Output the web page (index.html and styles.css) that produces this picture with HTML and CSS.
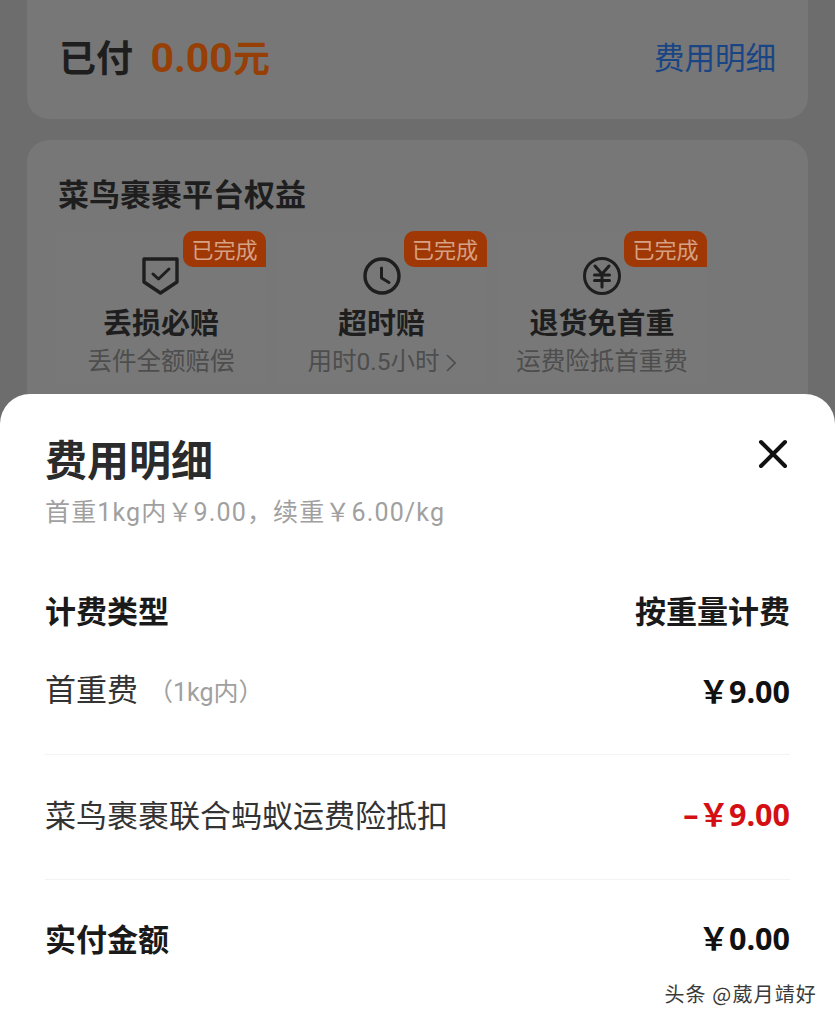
FILE: index.html
```html
<!DOCTYPE html>
<html lang="zh-CN">

<head>
    <meta charset="UTF-8">
    <title>费用明细</title>
    <link rel="stylesheet" href="styles.css">
</head>

<body>
    <div class="backdrop">
        <div class="paid-card">
            <div class="paid-total">已付 <span class="paid-amount">0.00<span class="paid-unit">元</span></span></div>
            <div class="paid-link">费用明细</div>
        </div>
        <div class="rights-card">
            <div class="rights-title">菜鸟裹裹平台权益</div>
            <div class="rights-list">
                <div class="rights-item">
                    <span class="badge">已完成</span>
                    <svg class="rights-icon" viewBox="0 0 38 38" fill="none" stroke="#1e1e1e" stroke-width="3.400" stroke-linejoin="round" stroke-linecap="round">
                        <path d="M2 2H35V25L18.500 36L2 25Z" />
                        <path d="M11 17L16.500 22L27 12" stroke-width="3" />
                    </svg>
                    <div class="rights-name">丢损必赔</div>
                    <div class="rights-desc">丢件全额赔偿</div>
                </div>
                <div class="rights-item">
                    <span class="badge">已完成</span>
                    <svg class="rights-icon" viewBox="0 0 38 38" fill="none" stroke="#1e1e1e" stroke-width="3.400" stroke-linecap="round" stroke-linejoin="round">
                        <circle cx="19" cy="19" r="17" />
                        <path d="M18.500 11V21L26 25.500" stroke-width="3" />
                    </svg>
                    <div class="rights-name">超时赔</div>
                    <div class="rights-desc">用时0.5小时<svg class="rights-arrow" viewBox="0 0 10 18" fill="none" stroke="#4d4d4d" stroke-width="1.600"><path d="M1 1L9 9L1 17" /></svg></div>
                </div>
                <div class="rights-item">
                    <span class="badge">已完成</span>
                    <svg class="rights-icon" viewBox="0 0 38 38" fill="none" stroke="#1e1e1e" stroke-width="3" stroke-linecap="round" stroke-linejoin="round">
                        <circle cx="19" cy="19" r="17.500" />
                        <path d="M12 9L19 17L26 9M11.500 18H26.500M11.500 23.500H26.500M19 17V30" />
                    </svg>
                    <div class="rights-name">退货免首重</div>
                    <div class="rights-desc">运费险抵首重费</div>
                </div>
            </div>
        </div>
    </div>

    <div class="sheet">
        <div class="sheet-head">
            <div>
                <h1 class="sheet-title">费用明细</h1>
                <p class="sheet-sub">首重1kg内￥9.00，续重￥6.00/kg</p>
            </div>
            <svg class="sheet-close" viewBox="0 0 30 30" fill="none" stroke="#111" stroke-width="4" stroke-linecap="round">
                <path d="M3 3L27 27M27 3L3 27" />
            </svg>
        </div>

        <div class="row row-type">
            <span class="row-strong">计费类型</span>
            <span class="row-strong">按重量计费</span>
        </div>
        <div class="row row-first">
            <span>首重费<span class="row-note">（1kg内）</span></span>
            <span class="money">￥9.00</span>
        </div>
        <div class="row row-discount">
            <span>菜鸟裹裹联合蚂蚁运费险抵扣</span>
            <span class="money money-red">–￥9.00</span>
        </div>
        <div class="row row-total">
            <span class="row-strong">实付金额</span>
            <span class="money">￥0.00</span>
        </div>
        <div class="watermark">头条 @葳月靖好</div>
    </div>
</body>

</html>
```

FILE: styles.css
```css
html, body {
    margin: 0;
    padding: 0;
    height: 1024px;
    overflow: hidden;
}

body {
    font-family: "Noto Sans CJK SC", "Noto Sans", sans-serif;
    background: #6d6d6d;
    color: #1e1e1e;
}

.backdrop {
    height: 394px;
    padding: 0 27px;
    box-sizing: border-box;
    overflow: hidden;
}

.paid-card {
    height: 119px;
    padding: 0 32px 4px 32px;
    box-sizing: border-box;
    display: flex;
    align-items: center;
    justify-content: space-between;
    background: #777;
    border-radius: 0 0 22px 22px;
}

.paid-total {
    font-size: 37px;
    font-weight: 700;
    line-height: 48px;
}

.paid-amount {
    color: #963f06;
    font-family: "Roboto", "Noto Sans CJK SC", sans-serif;
    font-size: 41px;
    margin-left: 9px;
}

.paid-unit {
    font-size: 37px;
}

.paid-link {
    font-size: 30.500px;
    line-height: 40px;
    color: #1a4585;
    margin-bottom: 3px;
}

.rights-card {
    height: 300px;
    margin-top: 21px;
    padding: 33px 29px 0;
    box-sizing: border-box;
    background: #777;
    border-radius: 22px 22px 0 0;
}

.rights-title {
    margin-left: 2px;
    font-size: 31px;
    font-weight: 700;
    line-height: 40px;
}

.rights-list {
    display: flex;
    gap: 10.500px;
    margin-top: 20px;
}

.rights-item {
    position: relative;
    width: 210px;
    height: 152px;
    display: flex;
    flex-direction: column;
    align-items: center;
    box-sizing: border-box;
    padding-top: 24px;
    background: #787878;
}

.badge {
    position: absolute;
    top: -2px;
    right: 0;
    width: 83px;
    height: 36px;
    text-align: center;
    font-size: 22px;
    line-height: 34px;
    color: #d6a184;
    background: #a03806;
    border-radius: 10px 10px 0 10px;
}

.rights-icon {
    width: 38px;
    height: 38px;
    display: block;
}

.rights-name {
    margin-top: 5px;
    font-size: 29px;
    font-weight: 700;
    line-height: 42px;
}

.rights-desc {
    margin-top: 2px;
    font-family: "Roboto", "Noto Sans CJK SC", sans-serif;
    font-size: 24.500px;
    line-height: 36px;
    color: #4d4d4d;
    white-space: nowrap;
}

.rights-arrow {
    width: 10px;
    height: 18px;
    margin-left: 6px;
    vertical-align: -2px;
}

.sheet {
    position: absolute;
    top: 394px;
    left: 0;
    right: 0;
    bottom: 0;
    padding: 0 45px;
    background: #fff;
    border-radius: 30px 30px 0 0;
}

.sheet-head {
    display: flex;
    justify-content: space-between;
    align-items: flex-start;
    padding-top: 36px;
}

.sheet-title {
    margin: 0;
    font-size: 42px;
    font-weight: 700;
    line-height: 56px;
    color: #2b2b2b;
}

.sheet-sub {
    margin: 9px 0 0;
    font-family: "Roboto", "Noto Sans CJK SC", sans-serif;
    font-size: 25px;
    line-height: 36px;
    letter-spacing: 1.150px;
    color: #a0a0a0;
}

.sheet-close {
    width: 30px;
    height: 30px;
    margin: 9px 2px 0 0;
}

.row {
    display: flex;
    justify-content: space-between;
    align-items: center;
    font-size: 31px;
    line-height: 44px;
    color: #333;
}

.row-strong {
    font-weight: 700;
    color: #1a1a1a;
}

.row-type {
    margin-top: 57px;
}

.row-first {
    margin-top: 34px;
    padding-bottom: 39px;
    border-bottom: 1px solid #f3f3f3;
}

.row-discount {
    margin-top: 37px;
    padding-bottom: 43px;
    border-bottom: 1px solid #f3f3f3;
}

.row-total {
    margin-top: 36px;
}

.row-note {
    font-family: "Roboto", "Noto Sans CJK SC", sans-serif;
    font-size: 25px;
    color: #a0a0a0;
    margin-left: 10px;
}

.money {
    font-family: "Open Sans", "Noto Sans CJK SC", sans-serif;
    font-size: 30.500px;
    font-weight: 700;
    color: #111;
}

.money-red {
    color: #d40f14;
}

.watermark {
    position: absolute;
    right: 18px;
    bottom: 16px;
    font-size: 20px;
    line-height: 28px;
    letter-spacing: 1.150px;
    color: #3a3a3a;
}
```
